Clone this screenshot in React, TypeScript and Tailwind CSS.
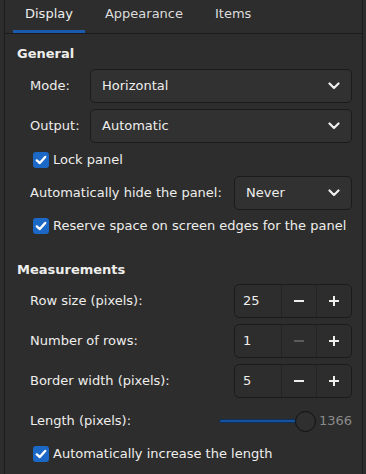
import React from 'react';

const Chevron = () => (
  <svg width="12" height="8" viewBox="0 0 12 8" className="shrink-0">
    <path d="M1.5 1.5 L6 6 L10.5 1.5" fill="none" stroke="#eeeeec" strokeWidth="2.2" strokeLinecap="round" strokeLinejoin="round" />
  </svg>
);

const Check = () => (
  <div className="w-[16px] h-[16px] rounded-[3px] bg-[#1c68c7] flex items-center justify-center shrink-0">
    <svg width="16" height="16" viewBox="0 0 16 16">
      <path d="M3.8 8.4 L6.8 11 L12.2 5" fill="none" stroke="#ffffff" strokeWidth="2.4" strokeLinecap="round" strokeLinejoin="round" />
    </svg>
  </div>
);

const Minus = ({ dim }: { dim?: boolean }) => (
  <svg width="12" height="12" viewBox="0 0 12 12">
    <path d="M1 6 H11" stroke={dim ? '#5c5c5c' : '#eeeeec'} strokeWidth="2" />
  </svg>
);

const Plus = () => (
  <svg width="12" height="12" viewBox="0 0 12 12">
    <path d="M1 6 H11 M6 1 V11" stroke="#eeeeec" strokeWidth="2" />
  </svg>
);

const Dropdown = ({ value, className }: { value: string; className?: string }) => (
  <div
    className={
      'h-[34px] rounded-[5px] border border-[#1b1b1b] bg-[#313131] flex items-center justify-between pl-[11px] pr-[11px] ' +
      (className ?? '')
    }
  >
    <span>{value}</span>
    <Chevron />
  </div>
);

const Spin = ({ value, minDisabled }: { value: string; minDisabled?: boolean }) => (
  <div className="ml-auto w-[118px] h-[34px] rounded-[5px] border border-[#1b1b1b] bg-[#2d2d2d] flex">
    <div className="w-[46px] flex items-center pl-[8px]">{value}</div>
    <div className="w-[35px] border-l border-[#232323] flex items-center justify-center">
      <Minus dim={minDisabled} />
    </div>
    <div className="flex-1 border-l border-[#232323] flex items-center justify-center">
      <Plus />
    </div>
  </div>
);

const CheckRow = ({ label, className }: { label: string; className?: string }) => (
  <div className={'h-[20px] flex items-center pl-[16px] gap-[4px] ' + (className ?? '')}>
    <Check />
    <span>{label}</span>
  </div>
);

export default function App() {
  return (
    <div className="w-[366px] h-[474px] bg-[#2d2d2d] text-[#eeeeec] text-[13px] font-['DejaVu_Sans',sans-serif] overflow-hidden">
      <div className="ml-[4px] mr-[3px] h-full border-x border-[#1c1c1c] flex flex-col">
        <div className="h-[34px] border-b border-[#1c1c1c] flex pl-[8px] gap-[8px]">
          <div className="h-[33px] px-[12px] pt-[4px] leading-[20px] border-b-[3px] border-[#1a5bb0]">Display</div>
          <div className="h-[33px] px-[12px] pt-[4px] leading-[20px] text-[#dcdcdc]">Appearance</div>
          <div className="h-[33px] px-[12px] pt-[4px] leading-[20px] text-[#dcdcdc]">Items</div>
        </div>

        <div className="flex flex-col pl-[12px] pr-[10px]">
          <div className="mt-[10px] h-[20px] leading-[20px] font-bold">General</div>

          <div className="mt-[5px] flex items-center">
            <span className="w-[73px] pl-[13px]">Mode:</span>
            <Dropdown value="Horizontal" className="flex-1" />
          </div>
          <div className="mt-[6px] flex items-center">
            <span className="w-[73px] pl-[13px]">Output:</span>
            <Dropdown value="Automatic" className="flex-1" />
          </div>

          <CheckRow label="Lock panel" className="mt-[7px]" />

          <div className="mt-[6px] flex items-center">
            <span className="pl-[13px]">Automatically hide the panel:</span>
            <Dropdown value="Never" className="ml-auto w-[118px]" />
          </div>

          <CheckRow label="Reserve space on screen edges for the panel" className="mt-[6px]" />

          <div className="mt-[24px] h-[20px] leading-[20px] font-bold">Measurements</div>

          <div className="mt-[4px] flex items-center">
            <span className="pl-[13px]">Row size (pixels):</span>
            <Spin value="25" />
          </div>
          <div className="mt-[6px] flex items-center">
            <span className="pl-[13px]">Number of rows:</span>
            <Spin value="1" minDisabled />
          </div>
          <div className="mt-[6px] flex items-center">
            <span className="pl-[13px]">Border width (pixels):</span>
            <Spin value="5" />
          </div>

          <div className="mt-[13px] h-[20px] flex items-center">
            <span className="pl-[13px]">Length (pixels):</span>
            <div className="ml-auto flex items-center">
              <div className="flex items-center w-[97px]">
                <div className="w-[78px] h-[4px] rounded-full bg-[#15539e] border border-[#0e2f57]" />
                <div className="w-[21px] h-[21px] -ml-[2px] rounded-full border border-[#111111] bg-[#2f2f2f]" />
              </div>
              <span className="ml-[3px] text-[#8b8b8b]">1366</span>
            </div>
          </div>

          <CheckRow label="Automatically increase the length" className="mt-[13px]" />
        </div>
      </div>
    </div>
  );
}
